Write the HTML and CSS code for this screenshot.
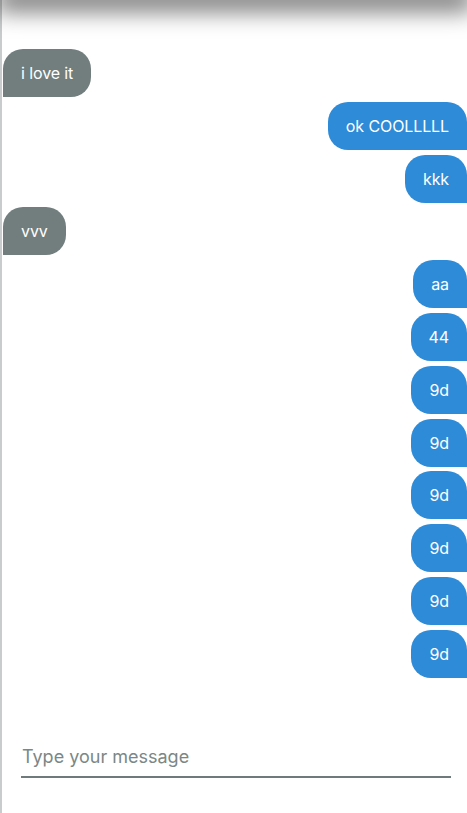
FILE: index.html
```html
<!DOCTYPE html>
<html lang="en">
<head>
<meta charset="utf-8">
<title>Chat</title>
<link rel="stylesheet" href="styles.css">
</head>
<body>
<div class="page">
  <header class="topbar"></header>
  <main class="messages">
    <div class="msg in">i love it</div>
    <div class="msg out">ok COOLLLLL</div>
    <div class="msg out">kkk</div>
    <div class="msg in">vvv</div>
    <div class="msg out">aa</div>
    <div class="msg out">44</div>
    <div class="msg out">9d</div>
    <div class="msg out">9d</div>
    <div class="msg out">9d</div>
    <div class="msg out">9d</div>
    <div class="msg out">9d</div>
    <div class="msg out">9d</div>
  </main>
  <form class="composer">
    <input class="composer-input" type="text" placeholder="Type your message">
  </form>
</div>
</body>
</html>
```
FILE: styles.css
```css
html, body {
  margin: 0;
  padding: 0;
  background: #fff;
}
body {
  font-family: Inter, "Liberation Sans", sans-serif;
  overflow: hidden;
}
.page {
  border-left: 2px solid #c9cccc;
  min-height: 813px;
  box-sizing: border-box;
  display: flex;
  flex-direction: column;
}
.topbar {
  height: 10px;
  margin-top: -10px;
  background: #fff;
  box-shadow: 0 4px 24px 6px rgba(0, 0, 0, 0.6);
}
.messages {
  display: flex;
  flex-direction: column;
  padding: 49px 0 0 1px;
}
.msg {
  font-size: 16px;
  line-height: 24px;
  padding: 12px 18px;
  color: #fff;
  margin-bottom: 4.8px;
  max-width: 75%;
  letter-spacing: -0.1px;
}
.msg.in {
  align-self: flex-start;
  background: #717e7d;
  border-radius: 20px 20px 20px 0;
}
.msg.out {
  align-self: flex-end;
  background: #2e8bd7;
  border-radius: 20px 20px 0 20px;
}
.composer {
  padding: 55px 16px 0 19px;
}
.composer-input {
  display: block;
  width: 100%;
  box-sizing: border-box;
  border: none;
  border-bottom: 2px solid #6f7b7a;
  font-family: Inter, "Liberation Sans", sans-serif;
  font-size: 18px;
  height: 40px;
  padding: 0 1px;
  outline: none;
  background: transparent;
  color: #333;
}
.composer-input::placeholder {
  color: #7b8786;
}
```
